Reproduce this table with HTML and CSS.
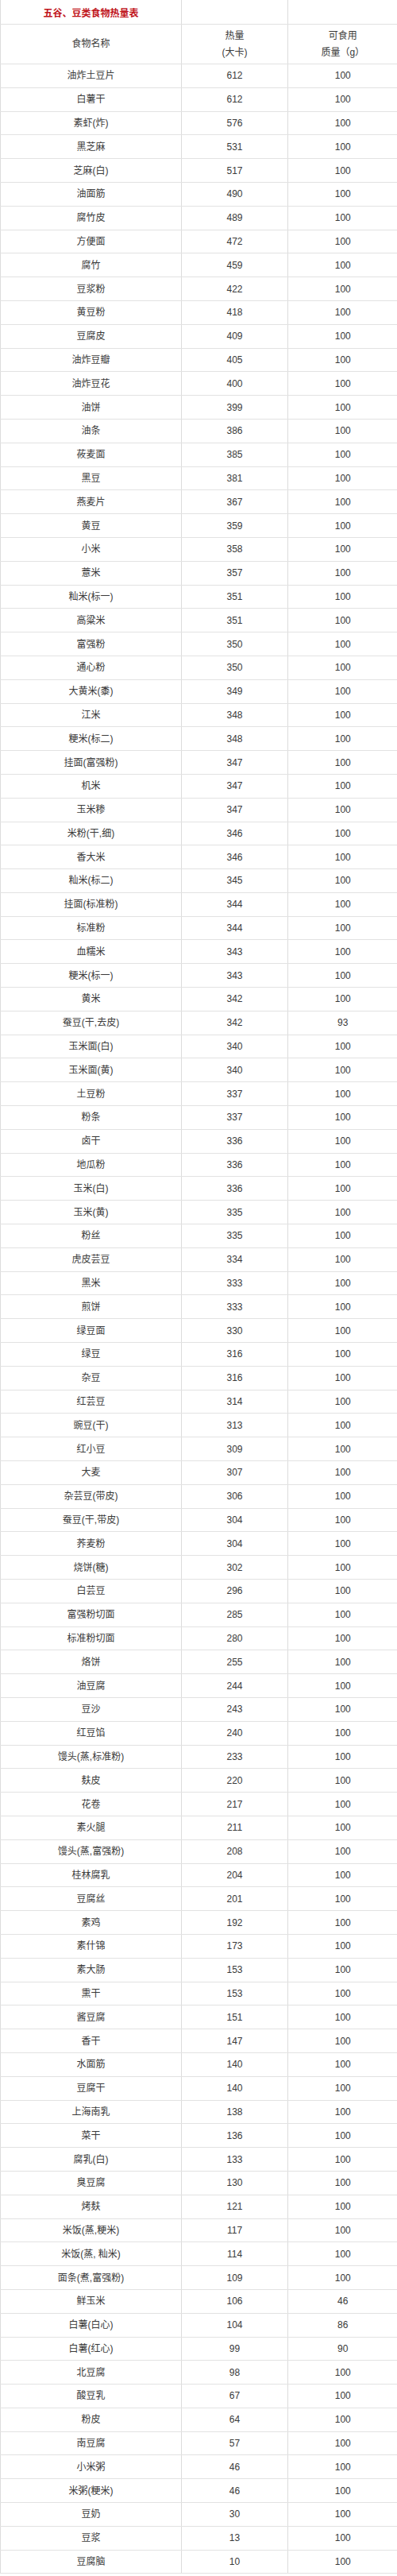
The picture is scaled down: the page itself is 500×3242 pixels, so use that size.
FILE: index.html
```html
<!DOCTYPE html>
<html lang="zh-CN">
<head>
<meta charset="utf-8">
<title>五谷、豆类食物热量表</title>
<link rel="stylesheet" href="styles.css">
</head>
<body>
<table class="kcal">
<colgroup><col class="c-name"><col class="c-kcal"><col class="c-mass"></colgroup>
<thead>
<tr class="title-row"><th class="title">五谷、豆类食物热量表</th><th></th><th></th></tr>
<tr class="head-row"><th>食物名称</th><th>热量<br>(大卡)</th><th>可食用<br>质量（g）</th></tr>
</thead>
<tbody>
<tr><td>油炸土豆片</td><td>612</td><td>100</td></tr>
<tr><td>白薯干</td><td>612</td><td>100</td></tr>
<tr><td>素虾(炸)</td><td>576</td><td>100</td></tr>
<tr><td>黑芝麻</td><td>531</td><td>100</td></tr>
<tr><td>芝麻(白)</td><td>517</td><td>100</td></tr>
<tr><td>油面筋</td><td>490</td><td>100</td></tr>
<tr><td>腐竹皮</td><td>489</td><td>100</td></tr>
<tr><td>方便面</td><td>472</td><td>100</td></tr>
<tr><td>腐竹</td><td>459</td><td>100</td></tr>
<tr><td>豆浆粉</td><td>422</td><td>100</td></tr>
<tr><td>黄豆粉</td><td>418</td><td>100</td></tr>
<tr><td>豆腐皮</td><td>409</td><td>100</td></tr>
<tr><td>油炸豆瓣</td><td>405</td><td>100</td></tr>
<tr><td>油炸豆花</td><td>400</td><td>100</td></tr>
<tr><td>油饼</td><td>399</td><td>100</td></tr>
<tr><td>油条</td><td>386</td><td>100</td></tr>
<tr><td>莜麦面</td><td>385</td><td>100</td></tr>
<tr><td>黑豆</td><td>381</td><td>100</td></tr>
<tr><td>燕麦片</td><td>367</td><td>100</td></tr>
<tr><td>黄豆</td><td>359</td><td>100</td></tr>
<tr><td>小米</td><td>358</td><td>100</td></tr>
<tr><td>薏米</td><td>357</td><td>100</td></tr>
<tr><td>籼米(标一)</td><td>351</td><td>100</td></tr>
<tr><td>高粱米</td><td>351</td><td>100</td></tr>
<tr><td>富强粉</td><td>350</td><td>100</td></tr>
<tr><td>通心粉</td><td>350</td><td>100</td></tr>
<tr><td>大黄米(黍)</td><td>349</td><td>100</td></tr>
<tr><td>江米</td><td>348</td><td>100</td></tr>
<tr><td>粳米(标二)</td><td>348</td><td>100</td></tr>
<tr><td>挂面(富强粉)</td><td>347</td><td>100</td></tr>
<tr><td>机米</td><td>347</td><td>100</td></tr>
<tr><td>玉米糁</td><td>347</td><td>100</td></tr>
<tr><td>米粉(干,细)</td><td>346</td><td>100</td></tr>
<tr><td>香大米</td><td>346</td><td>100</td></tr>
<tr><td>籼米(标二)</td><td>345</td><td>100</td></tr>
<tr><td>挂面(标准粉)</td><td>344</td><td>100</td></tr>
<tr><td>标准粉</td><td>344</td><td>100</td></tr>
<tr><td>血糯米</td><td>343</td><td>100</td></tr>
<tr><td>粳米(标一)</td><td>343</td><td>100</td></tr>
<tr><td>黄米</td><td>342</td><td>100</td></tr>
<tr><td>蚕豆(干,去皮)</td><td>342</td><td>93</td></tr>
<tr><td>玉米面(白)</td><td>340</td><td>100</td></tr>
<tr><td>玉米面(黄)</td><td>340</td><td>100</td></tr>
<tr><td>土豆粉</td><td>337</td><td>100</td></tr>
<tr><td>粉条</td><td>337</td><td>100</td></tr>
<tr><td>卤干</td><td>336</td><td>100</td></tr>
<tr><td>地瓜粉</td><td>336</td><td>100</td></tr>
<tr><td>玉米(白)</td><td>336</td><td>100</td></tr>
<tr><td>玉米(黄)</td><td>335</td><td>100</td></tr>
<tr><td>粉丝</td><td>335</td><td>100</td></tr>
<tr><td>虎皮芸豆</td><td>334</td><td>100</td></tr>
<tr><td>黑米</td><td>333</td><td>100</td></tr>
<tr><td>煎饼</td><td>333</td><td>100</td></tr>
<tr><td>绿豆面</td><td>330</td><td>100</td></tr>
<tr><td>绿豆</td><td>316</td><td>100</td></tr>
<tr><td>杂豆</td><td>316</td><td>100</td></tr>
<tr><td>红芸豆</td><td>314</td><td>100</td></tr>
<tr><td>豌豆(干)</td><td>313</td><td>100</td></tr>
<tr><td>红小豆</td><td>309</td><td>100</td></tr>
<tr><td>大麦</td><td>307</td><td>100</td></tr>
<tr><td>杂芸豆(带皮)</td><td>306</td><td>100</td></tr>
<tr><td>蚕豆(干,带皮)</td><td>304</td><td>100</td></tr>
<tr><td>荞麦粉</td><td>304</td><td>100</td></tr>
<tr><td>烧饼(糖)</td><td>302</td><td>100</td></tr>
<tr><td>白芸豆</td><td>296</td><td>100</td></tr>
<tr><td>富强粉切面</td><td>285</td><td>100</td></tr>
<tr><td>标准粉切面</td><td>280</td><td>100</td></tr>
<tr><td>烙饼</td><td>255</td><td>100</td></tr>
<tr><td>油豆腐</td><td>244</td><td>100</td></tr>
<tr><td>豆沙</td><td>243</td><td>100</td></tr>
<tr><td>红豆馅</td><td>240</td><td>100</td></tr>
<tr><td>馒头(蒸,标准粉)</td><td>233</td><td>100</td></tr>
<tr><td>麸皮</td><td>220</td><td>100</td></tr>
<tr><td>花卷</td><td>217</td><td>100</td></tr>
<tr><td>素火腿</td><td>211</td><td>100</td></tr>
<tr><td>馒头(蒸,富强粉)</td><td>208</td><td>100</td></tr>
<tr><td>桂林腐乳</td><td>204</td><td>100</td></tr>
<tr><td>豆腐丝</td><td>201</td><td>100</td></tr>
<tr><td>素鸡</td><td>192</td><td>100</td></tr>
<tr><td>素什锦</td><td>173</td><td>100</td></tr>
<tr><td>素大肠</td><td>153</td><td>100</td></tr>
<tr><td>熏干</td><td>153</td><td>100</td></tr>
<tr><td>酱豆腐</td><td>151</td><td>100</td></tr>
<tr><td>香干</td><td>147</td><td>100</td></tr>
<tr><td>水面筋</td><td>140</td><td>100</td></tr>
<tr><td>豆腐干</td><td>140</td><td>100</td></tr>
<tr><td>上海南乳</td><td>138</td><td>100</td></tr>
<tr><td>菜干</td><td>136</td><td>100</td></tr>
<tr><td>腐乳(白)</td><td>133</td><td>100</td></tr>
<tr><td>臭豆腐</td><td>130</td><td>100</td></tr>
<tr><td>烤麸</td><td>121</td><td>100</td></tr>
<tr><td>米饭(蒸,粳米)</td><td>117</td><td>100</td></tr>
<tr><td>米饭(蒸, 籼米)</td><td>114</td><td>100</td></tr>
<tr><td>面条(煮,富强粉)</td><td>109</td><td>100</td></tr>
<tr><td>鲜玉米</td><td>106</td><td>46</td></tr>
<tr><td>白薯(白心)</td><td>104</td><td>86</td></tr>
<tr><td>白薯(红心)</td><td>99</td><td>90</td></tr>
<tr><td>北豆腐</td><td>98</td><td>100</td></tr>
<tr><td>酸豆乳</td><td>67</td><td>100</td></tr>
<tr><td>粉皮</td><td>64</td><td>100</td></tr>
<tr><td>南豆腐</td><td>57</td><td>100</td></tr>
<tr><td>小米粥</td><td>46</td><td>100</td></tr>
<tr><td>米粥(粳米)</td><td>46</td><td>100</td></tr>
<tr><td>豆奶</td><td>30</td><td>100</td></tr>
<tr><td>豆浆</td><td>13</td><td>100</td></tr>
<tr><td>豆腐脑</td><td>10</td><td>100</td></tr>
</tbody>
</table>
</body>
</html>
```
FILE: styles.css
```css
html, body {
  margin: 0;
  padding: 0;
  background: #ffffff;
}

.kcal {
  width: 500px;
  table-layout: fixed;
  border-collapse: collapse;
  font-family: "Liberation Sans", "Noto Sans CJK SC", sans-serif;
  font-size: 12px;
  color: #3a3a3a;
}

.c-name { width: 228px; }
.c-kcal { width: 134px; }
.c-mass { width: 138px; }

.kcal th,
.kcal td {
  padding: 0;
  text-align: center;
  vertical-align: middle;
  font-weight: normal;
  border-bottom: 1px solid #e2e2e2;
  border-left: 1px solid #dcdcdc;
}

.title-row th {
  height: 30px;
}

.kcal .title {
  color: #c0131a;
  font-weight: bold;
  font-size: 12px;
}

.head-row th {
  height: 49px;
  line-height: 21px;
}

.kcal tbody td {
  height: 28.81px;
  line-height: 16px;
}
```
